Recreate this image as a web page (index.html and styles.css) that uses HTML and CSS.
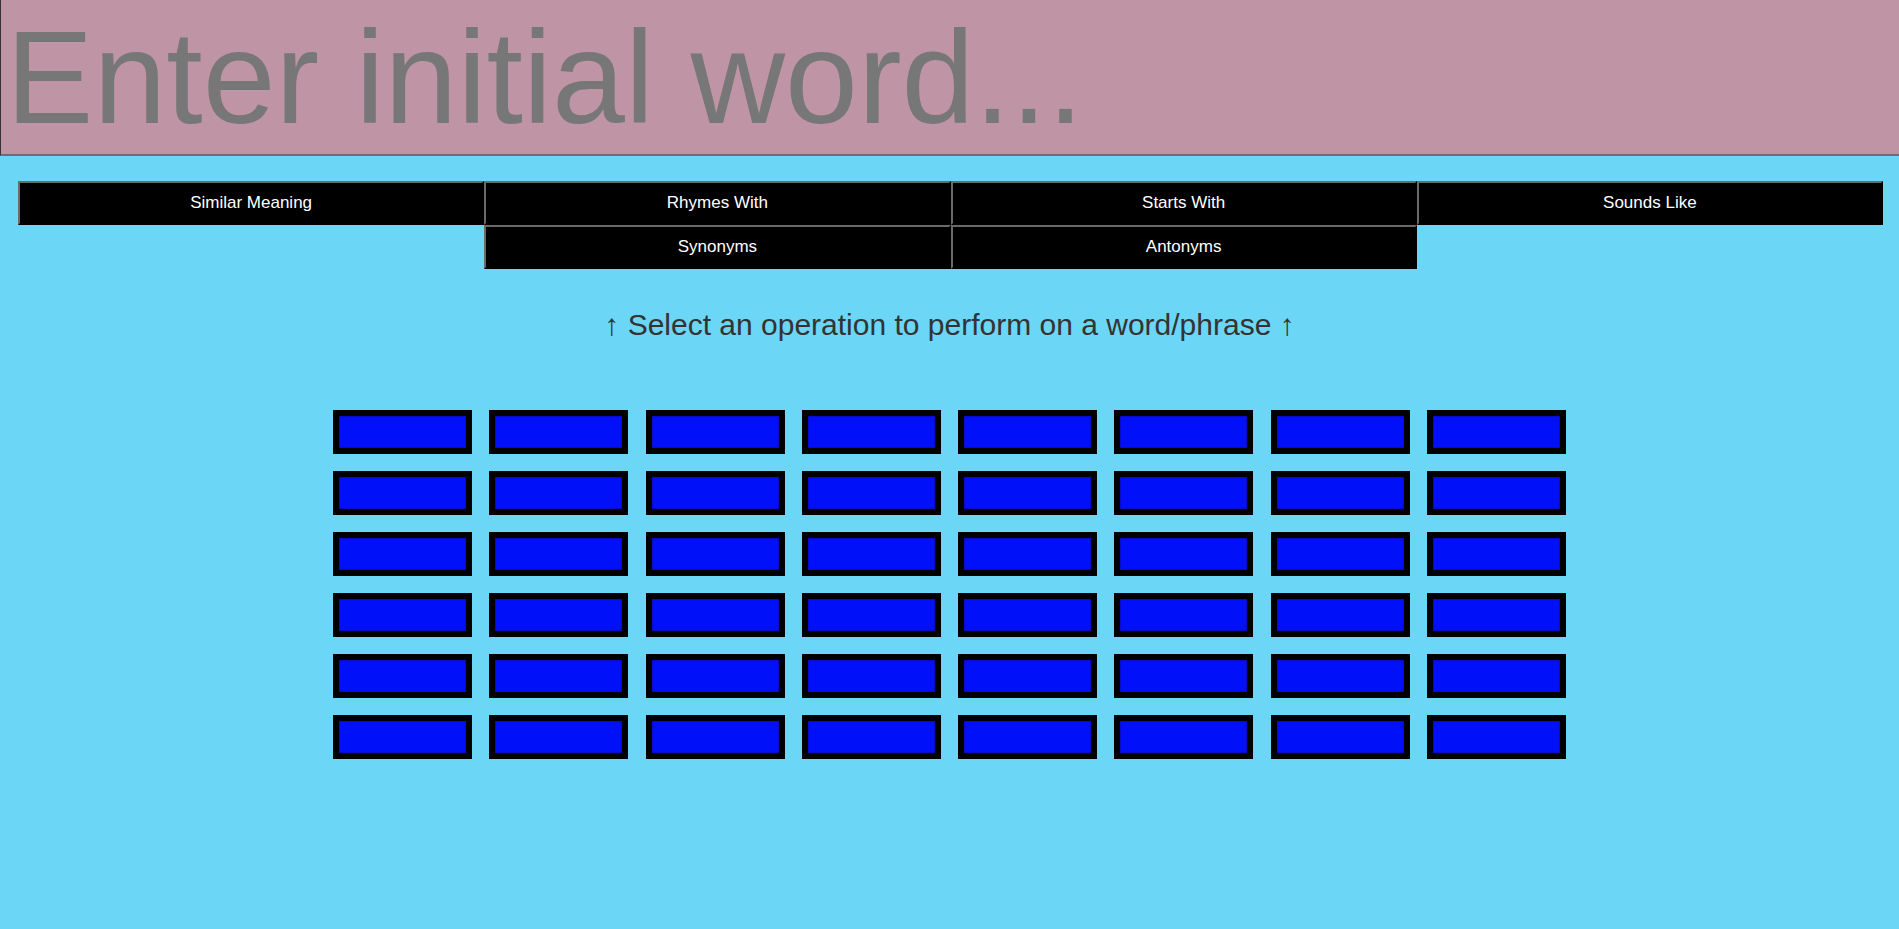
FILE: index.html
```html
<!DOCTYPE html>
<html lang="en">
<head>
<meta charset="utf-8">
<title>Word Tool</title>
<link rel="stylesheet" href="styles.css">
</head>
<body>
<div class="top">
  <input class="word-input" type="text" placeholder="Enter initial word...">
</div>
<div class="ops">
  <button class="op">Similar Meaning</button>
  <button class="op">Rhymes With</button>
  <button class="op">Starts With</button>
  <button class="op">Sounds Like</button>
  <button class="op op-syn">Synonyms</button>
  <button class="op">Antonyms</button>
</div>
<p class="hint">↑ Select an operation to perform on a word/phrase ↑</p>
<div class="grid">
  <div class="cell"></div><div class="cell"></div><div class="cell"></div><div class="cell"></div><div class="cell"></div><div class="cell"></div><div class="cell"></div><div class="cell"></div>
  <div class="cell"></div><div class="cell"></div><div class="cell"></div><div class="cell"></div><div class="cell"></div><div class="cell"></div><div class="cell"></div><div class="cell"></div>
  <div class="cell"></div><div class="cell"></div><div class="cell"></div><div class="cell"></div><div class="cell"></div><div class="cell"></div><div class="cell"></div><div class="cell"></div>
  <div class="cell"></div><div class="cell"></div><div class="cell"></div><div class="cell"></div><div class="cell"></div><div class="cell"></div><div class="cell"></div><div class="cell"></div>
  <div class="cell"></div><div class="cell"></div><div class="cell"></div><div class="cell"></div><div class="cell"></div><div class="cell"></div><div class="cell"></div><div class="cell"></div>
  <div class="cell"></div><div class="cell"></div><div class="cell"></div><div class="cell"></div><div class="cell"></div><div class="cell"></div><div class="cell"></div><div class="cell"></div>
</div>
</body>
</html>
```

FILE: styles.css
```css
html, body {
  margin: 0;
  padding: 0;
  background: #6bd6f6;
  font-family: "Liberation Sans", Arial, sans-serif;
}

.top {
  height: 156px;
  overflow: hidden;
}

.word-input {
  display: block;
  box-sizing: border-box;
  width: 100%;
  height: 156px;
  margin: 0;
  padding: 0 0 0 5px;
  border: none;
  border-left: 1px solid #333;
  border-bottom: 2px solid #6e6e6e;
  background: #bf95a6;
  font-family: "Liberation Sans", Arial, sans-serif;
  font-size: 131px;
  color: #777;
  outline: none;
}

.word-input::placeholder {
  color: #777;
  opacity: 1;
}

.ops {
  display: grid;
  grid-template-columns: repeat(4, 1fr);
  margin: 25px 16px 0 18px;
}

.op {
  box-sizing: border-box;
  height: 44px;
  margin: 0;
  padding: 0;
  background: #000;
  color: #fff;
  font-family: "Liberation Sans", Arial, sans-serif;
  font-size: 17px;
  border: 2px outset #767676;
  border-color: #6a6a6a #3a3a3a #3a3a3a #6a6a6a;
}

.op-syn {
  grid-column-start: 2;
}

.hint {
  margin: 0;
  padding-top: 36px;
  text-align: center;
  font-size: 30px;
  color: #333;
  line-height: 40px;
}

.grid {
  display: grid;
  grid-template-columns: repeat(8, 139px);
  grid-auto-rows: 44px;
  column-gap: 17.3px;
  row-gap: 17px;
  justify-content: center;
  margin-top: 65px;
}

.cell {
  box-sizing: border-box;
  border: 6px solid #000;
  background: #0010f8;
  box-shadow: inset 0 0 0 1px #0a0ac8;
}
```
